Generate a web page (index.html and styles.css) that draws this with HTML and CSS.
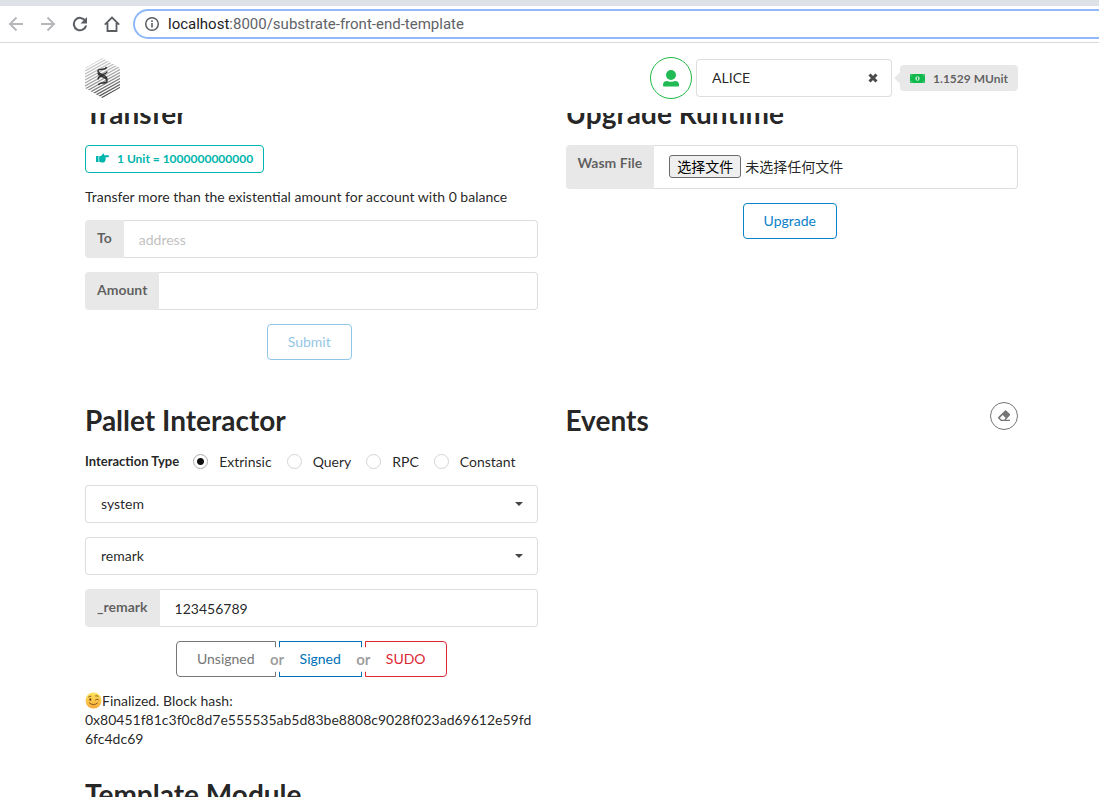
FILE: index.html
```html
<!DOCTYPE html>
<html lang="en">
<head>
<meta charset="utf-8">
<title>Substrate Front End Template</title>
<link rel="stylesheet" href="styles.css">
</head>
<body>
<div class="browser">
  <div class="tab-strip"></div>
  <div class="toolbar">
    <button class="nav-button" type="button" aria-label="Back"><svg width="16" height="16" viewBox="0 0 16 16" fill="none" stroke="#b5b7ba" stroke-width="2"><path d="M15 8H2.500M8.500 1.500L2 8l6.500 6.500"/></svg></button>
    <button class="nav-button" type="button" aria-label="Forward"><svg width="16" height="16" viewBox="0 0 16 16" fill="none" stroke="#b5b7ba" stroke-width="2"><path d="M1 8h12.500M7.500 1.500L14 8l-6.500 6.500"/></svg></button>
    <button class="nav-button" type="button" aria-label="Reload"><svg width="16" height="16" viewBox="0 0 16 16"><path d="M13.200 4.600A6.200 6.200 0 1 0 14.100 9.500" fill="none" stroke="#5a5d61" stroke-width="2"/><path d="M15 1v6.500H8.500z" fill="#5a5d61"/></svg></button>
    <button class="nav-button" type="button" aria-label="Home"><svg width="16" height="16" viewBox="0 0 16 16" fill="none" stroke="#5a5d61" stroke-width="1.800"><path d="M0.800 8.700L8 1.500l7.200 7.200M3.500 7v8h9V7"/></svg></button>
    <div class="address-bar">
      <svg width="16" height="16" viewBox="0 0 16 16"><circle cx="8" cy="8" r="6.300" fill="none" stroke="#5a5d61" stroke-width="1.500"/><path d="M7.200 7h1.600v4.500H7.200zM7.200 4.300h1.600v1.600H7.200z" fill="#5a5d61"/></svg>
      <span class="url">localhost<span class="url-path">:8000/substrate-front-end-template</span></span>
    </div>
  </div>
</div>

<header class="site-header">
  <svg class="logo" width="36" height="40" viewBox="0 0 36 40" role="img" aria-label="Substrate">
    <defs>
      <clipPath id="hex"><path d="M17.500 0L35 10v20L17.500 40 0 30V10z"/></clipPath>
      <linearGradient id="shade" gradientUnits="userSpaceOnUse" x1="8" y1="0" x2="22" y2="40"><stop offset="0" stop-color="#ddd"/><stop offset="0.500" stop-color="#a8a8a8"/><stop offset="1" stop-color="#444"/></linearGradient>
    </defs>
    <g clip-path="url(#hex)" stroke="url(#shade)" stroke-width="1.400">
      <path d="M0 10L36-10M0 13L36-7M0 16L36-4M0 19L36-1M0 22L36 2M0 25L36 5M0 28L36 8M0 31L36 11M0 34L36 14M0 37L36 17M0 40L36 20M0 43L36 23M0 46L36 26M0 49L36 29M0 52L36 32M0 55L36 35"/>
    </g>
    <path d="M21.500 10c-.5 2-2 2.200-4 2.200-3 0-5 .3-4.500 2.300.8 3.500 9 2.500 9 8M22 14.500c-.5 3.500-9 2.500-9 8M13 16c1 4 8.500 3.500 9 7.500.2 2-2 2.500-4.500 2.500-2 0-3.500.3-4 2" transform="translate(0 -1)" fill="none" stroke="#333" stroke-width="1.500"/>
  </svg>
  <div class="account">
    <button class="avatar" type="button" aria-label="Account"><svg width="16" height="17" viewBox="0 0 16 17" fill="#21ba55"><circle cx="8" cy="5" r="5"/><path d="M0 14.500C0 12 2 11 4 11c2 1 6 1 8 0 2 0 4 1 4 3.500V15.500Q16 16.500 15 16.500H1Q0 16.500 0 15.500z"/></svg></button>
    <div class="select-wrap account-select">
      <select class="field select" aria-label="Selected account"><option>ALICE</option></select>
      <button class="clear" type="button" aria-label="Clear"><svg width="10" height="10" viewBox="0 0 10 10"><path d="M1.500 1.500l7 7M8.500 1.500l-7 7" stroke="#4a4a4a" stroke-width="3"/></svg></button>
    </div>
    <div class="balance"><svg width="15" height="9" viewBox="0 0 15 9"><rect width="15" height="9" rx="1" fill="#10b94c"/><circle cx="7.500" cy="4.500" r="2.200" fill="#b9e5c8"/><path d="M7.500 3v3" stroke="#10b94c"/><path d="M1 2.500V1h1.500M12.500 1H14v1.500M14 6.500V8h-1.500M2.500 8H1V6.500" fill="none" stroke="#6fd293" stroke-width="0.700"/></svg>1.1529 MUnit</div>
  </div>
</header>

<main class="viewport">
  <div class="page">
    <section class="column transfer">
      <h1>Transfer</h1>
      <div class="unit-label"><svg width="13" height="11" viewBox="0 0 13 11" fill="#00b5ad"><path d="M0 3h2.500v6H0zM3.200 3.200L5 3l2-2.200Q8.500 0 8 2.300h4Q13 2.500 13 3.300T12 4.300H9.300q1 .8.200 1.800.5 1.200-.5 1.800.1 1.400-1.500 1.600H5.500L3.200 8.700z"/></svg>1 Unit = 1000000000000</div>
      <p class="hint">Transfer more than the existential amount for account with 0 balance</p>
      <div class="labeled"><label for="to">To</label><input class="field" id="to" type="text" placeholder="address"></div>
      <div class="labeled"><label for="amount">Amount</label><input class="field" id="amount" type="text"></div>
      <div class="actions"><button class="button blue" type="button" disabled>Submit</button></div>
    </section>

    <section class="column">
      <h1>Upgrade Runtime</h1>
      <div class="labeled">
        <label for="wasm">Wasm File</label>
        <label class="field file" for="wasm"><input class="file-input" id="wasm" type="file"><span class="file-button">选择文件</span><span>未选择任何文件</span></label>
      </div>
      <div class="actions"><button class="button blue" type="button">Upgrade</button></div>
    </section>

    <section class="column">
      <h1>Pallet Interactor</h1>
      <div class="radios" role="radiogroup" aria-labelledby="interaction">
        <span class="radios-title" id="interaction">Interaction Type</span>
        <label class="radio"><input type="radio" name="type" checked>Extrinsic</label>
        <label class="radio"><input type="radio" name="type">Query</label>
        <label class="radio"><input type="radio" name="type">RPC</label>
        <label class="radio"><input type="radio" name="type">Constant</label>
      </div>
      <div class="select-wrap"><select class="field select" aria-label="Pallet"><option>system</option></select><svg class="caret" width="8" height="4" viewBox="0 0 8 4"><path d="M0 0h8L4 4z" fill="#444"/></svg></div>
      <div class="select-wrap"><select class="field select" aria-label="Callable"><option>remark</option></select><svg class="caret" width="8" height="4" viewBox="0 0 8 4"><path d="M0 0h8L4 4z" fill="#444"/></svg></div>
      <div class="labeled"><label for="remark">_remark</label><input class="field" id="remark" type="text" value="123456789"></div>
      <div class="choices">
        <button class="button grey" type="button">Unsigned</button>
        <span class="or"><span>or</span></span>
        <button class="button signed" type="button">Signed</button>
        <span class="or"><span>or</span></span>
        <button class="button red" type="button">SUDO</button>
      </div>
      <div class="status"><svg class="emoji" width="17" height="17" viewBox="0 0 17 17" role="img" aria-label="😉"><defs><linearGradient id="face" x1="0" y1="0" x2="0" y2="1"><stop offset="0" stop-color="#ffe45c"/><stop offset="1" stop-color="#f6a93b"/></linearGradient></defs><circle cx="8.500" cy="8.500" r="8" fill="url(#face)"/><g fill="none" stroke="#6b3f16" stroke-linecap="round"><path d="M3.500 5q1.200-1.300 2.500-.8M10.500 3.800q1.800-.7 2.800.7M10.300 8q1.500-1.800 3.200-.3M4.500 11q4 3.500 8 0" stroke-width="0.800"/></g><ellipse cx="5.300" cy="7.500" rx="1" ry="1.300" fill="#6b3f16"/></svg>Finalized. Block hash: 0x80451f81c3f0c8d7e555535ab5d83be8808c9028f023ad69612e59fd6fc4dc69</div>
    </section>

    <section class="column">
      <div class="title-row">
        <h1>Events</h1>
        <button class="erase" type="button" aria-label="Clear events"><svg width="14" height="12" viewBox="0 0 14 12" fill="#767676"><path fill-rule="evenodd" d="M8 .5Q8.800 0 9.500.7l3.300 3.300q.7.700 0 1.500L8.800 9.800H13V11H4L1.300 8.500q-.7-.8 0-1.500zM5.700 5L2.800 8l1.900 1.800h2.500L8.600 8z"/></svg></button>
      </div>
    </section>

    <section class="column">
      <h1>Template Module</h1>
    </section>
  </div>
</main>
</body>
</html>
```
FILE: styles.css
```css
* { box-sizing: border-box; }

body {
  margin: 0;
  height: 100vh;
  display: flex;
  flex-direction: column;
  overflow: hidden;
  background: #fff;
  color: rgba(0, 0, 0, 0.87);
  font: 14px/19px Lato, "Noto Sans CJK SC", sans-serif;
}

button, input, select { font: inherit; margin: 0; }
button { cursor: pointer; }
svg { flex: none; }

/* Browser toolbar */
.browser { flex: none; border-bottom: 1px solid #d9dadc; }
.tab-strip { height: 6px; background: #dee1e6; }
.toolbar { display: flex; align-items: center; gap: 16px; height: 36px; padding-left: 8px; }
.nav-button { display: flex; padding: 0; border: 0; background: none; }
.address-bar {
  flex: 1;
  display: flex;
  align-items: center;
  gap: 8px;
  height: 30px;
  margin-left: -3px;
  padding-left: 9px;
  border: 2px solid #8fb9fb;
  border-right: 0;
  border-radius: 15px 0 0 15px;
  color: #202124;
  font: 15px/20px Roboto, sans-serif;
}
.url-path { color: #5f6368; }

/* Site header */
.site-header {
  flex: none;
  display: flex;
  align-items: center;
  justify-content: space-between;
  height: 70px;
  padding: 0 81px 0 85px;
}
.account { display: flex; align-items: center; }
.avatar {
  display: flex;
  align-items: center;
  justify-content: center;
  width: 42px;
  height: 42px;
  margin-right: 4px;
  padding: 0;
  border: 1px solid #21ba45;
  border-radius: 50%;
  background: #fff;
}
.account-select { width: 196px; margin-right: 8px; }
.clear {
  position: absolute;
  top: 0;
  right: 8px;
  display: flex;
  align-items: center;
  justify-content: center;
  width: 22px;
  height: 100%;
  padding: 0;
  border: 0;
  background: none;
}
.balance {
  position: relative;
  display: flex;
  align-items: center;
  gap: 8px;
  height: 26px;
  padding: 0 10px;
  border-radius: 4px;
  background: #e8e8e8;
  color: rgba(0, 0, 0, 0.6);
  font-size: 12px;
  font-weight: 700;
}
.balance::before {
  content: "";
  position: absolute;
  top: 9px;
  left: -4px;
  width: 8px;
  height: 8px;
  background: #e8e8e8;
  transform: rotate(45deg);
}

/* Scrolled page */
.viewport { flex: 1; min-height: 0; overflow: hidden; }
.page {
  display: grid;
  grid-template-columns: 1fr 1fr;
  gap: 28px;
  margin-top: -18px;
  padding: 0 81px 0 85px;
}
.column { display: flex; flex-direction: column; gap: 14px; min-width: 0; }
.transfer { min-height: 279px; }
h1 { margin: 0; font-size: 28px; line-height: 36px; font-weight: 700; }

.unit-label {
  align-self: flex-start;
  display: flex;
  align-items: center;
  gap: 8px;
  height: 28px;
  padding: 0 10px 2px;
  border: 1px solid #00b5ad;
  border-radius: 4px;
  color: #00b5ad;
  font-size: 12px;
  font-weight: 700;
}
.hint { margin: 0; }

.field {
  width: 100%;
  min-width: 0;
  height: 38px;
  padding: 0 15px;
  border: 1px solid rgba(34, 36, 38, 0.15);
  border-radius: 4px;
  outline: 0;
  background: #fff;
  color: rgba(0, 0, 0, 0.87);
}
.field::placeholder { color: #c2c2c2; }

.labeled { display: flex; }
.labeled > label:first-child {
  flex: none;
  padding: 8px 12px;
  border-radius: 4px 0 0 4px;
  background: #e8e8e8;
  color: rgba(0, 0, 0, 0.6);
  font-weight: 700;
}
.labeled > .field { flex: 1; border-left: 0; border-radius: 0 4px 4px 0; }

.labeled > .file {
  display: flex;
  align-items: center;
  gap: 4px;
  height: 44px;
  padding-bottom: 2px;
}
.file-input { position: absolute; width: 1px; height: 1px; opacity: 0; }
.file-button {
  padding: 1px 7px;
  border: 1px solid #6b6b6b;
  border-radius: 3px;
  background: #efefef;
  color: #000;
}

.select-wrap { position: relative; }
.select { display: block; padding-bottom: 2px; appearance: none; }
.caret { position: absolute; top: 17px; right: 15px; pointer-events: none; }

.actions { display: flex; justify-content: center; padding-right: 4px; }
.button {
  height: 36px;
  padding: 0 20px 2px;
  border: 1px solid currentColor;
  border-radius: 4px;
  background: #fff;
}
.blue { color: #0a81c8; }
.blue:disabled { opacity: 0.45; }

.radios { display: flex; align-items: center; gap: 15px; }
.radios-title { margin-right: -1px; font-size: 13px; font-weight: 700; }
.radio { display: flex; align-items: center; gap: 11px; }
.radio input {
  appearance: none;
  width: 15px;
  height: 15px;
  border: 1px solid #d4d4d5;
  border-radius: 50%;
  background: #fff;
}
.radio input:checked {
  border-color: #aaa;
  background: radial-gradient(circle, #111 0 3px, #fff 4px);
}

.choices { display: flex; justify-content: center; }
.choices .button:first-child { border-radius: 4px 0 0 4px; }
.choices .button:last-child { border-radius: 0 4px 4px 0; }
.choices .signed { color: #0070b8; border-radius: 0; }
.grey { color: #767676; }
.red { color: #db2832; }
.or { position: relative; width: 3px; }
.or span {
  position: absolute;
  top: 6px;
  left: -11px;
  width: 25px;
  height: 25px;
  border-radius: 50%;
  background: #fff;
  color: rgba(0, 0, 0, 0.4);
  font-size: 15px;
  font-weight: 700;
  line-height: 25px;
  text-align: center;
}

.status { overflow-wrap: anywhere; }
.emoji { vertical-align: -3px; }

.title-row { display: flex; justify-content: space-between; }
.erase {
  display: flex;
  align-items: center;
  justify-content: center;
  width: 28px;
  height: 28px;
  padding: 0;
  border: 1px solid #767676;
  border-radius: 50%;
  background: #fff;
}
```
